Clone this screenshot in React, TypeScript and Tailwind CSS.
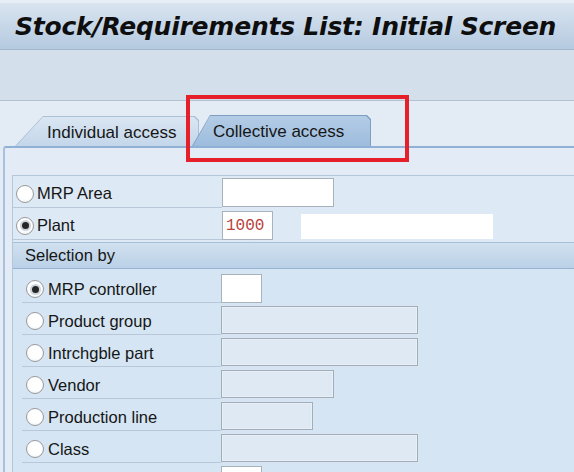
import React from "react";

const Radio = ({ checked }: { checked?: boolean }) => (
  <span className="flex h-[18px] w-[18px] shrink-0 items-center justify-center rounded-full border border-[#9a9a9a] bg-[radial-gradient(circle_at_50%_35%,#ffffff_55%,#e9ecef)]">
    {checked && (
      <span className="h-[7px] w-[7px] rounded-full bg-[#262626] shadow-[0_0_0_2px_#cdd3da]" />
    )}
  </span>
);

type RowProps = {
  label: string;
  checked?: boolean;
  labelClass: string;
  children?: React.ReactNode;
};

const Row = ({ label, checked, labelClass, children }: RowProps) => (
  <div className="flex h-[32px]">
    <div className={labelClass}>
      <Radio checked={checked} />
      <span className="leading-none">{label}</span>
    </div>
    <div className="flex items-start gap-[28px] pt-[3px]">{children}</div>
  </div>
);

const Disabled = ({ w }: { w: string }) => (
  <div className={`${w} h-[28px] border border-[#a3adb7] bg-[#dfe9f3] shadow-[inset_0_0_0_1px_#e8eff6]`} />
);

export default function App() {
  const frameLabel =
    "flex w-[209px] shrink-0 items-center gap-[3px] border-b border-[#b9c8d8] pl-[3px] pt-[4px]";
  const groupLabel =
    "flex w-[199px] shrink-0 items-center gap-[4px] border-b border-[#b9c8d8] pl-[4px] pt-[5px]";
  return (
    <div className="relative h-[472px] w-[574px] overflow-hidden bg-[#e3ecf5] font-['Liberation_Sans',Arial,sans-serif] text-[16.5px] text-[#161616]">
      {/* Title bar */}
      <div className="flex h-[50px] items-center border-t-[3px] border-b border-t-[#e8eef5] border-b-[#a3b7cc] bg-[linear-gradient(to_bottom,#d9e4f0,#b5cae0)] pl-[15px]">
        <h1 className="font-['DejaVu_Sans',Verdana,sans-serif] text-[25px] font-bold italic leading-none tracking-[-0.22px] text-[#0e0e0e]">
          Stock/Requirements List: Initial Screen
        </h1>
      </div>
      {/* Toolbar */}
      <div className="h-[51px] border-b border-[#b3c2d2] bg-[#d3dfeb]" />
      {/* Tab strip */}
      <div className="flex h-[45px] items-end pl-[15px] text-[17px]">
        <div className="relative flex h-[30px] w-[184px] items-center pl-[32px] pt-[3px]">
          <div className="absolute inset-0 bg-[#a9c0d8] [clip-path:polygon(0_100%,28px_0,calc(100%-4px)_0,100%_4px,100%_100%)]" />
          <div className="absolute inset-x-[1px] top-[1px] bottom-0 bg-[linear-gradient(to_bottom,#dae6f2,#c3d6ea)] [clip-path:polygon(0_100%,27px_0,calc(100%-4px)_0,100%_4px,100%_100%)]" />
          <span className="relative">Individual access</span>
        </div>
        <div className="relative ml-[-7px] flex h-[31px] w-[179px] items-center pl-[21px] pt-[3px]">
          <div className="absolute inset-0 bg-[#7f9fc2] [clip-path:polygon(0_100%,18px_0,calc(100%-4px)_0,100%_4px,100%_100%)]" />
          <div className="absolute inset-x-[1px] top-[1px] bottom-0 bg-[linear-gradient(to_bottom,#b3cce6,#9dbcdd)] [clip-path:polygon(0_100%,17px_0,calc(100%-4px)_0,100%_4px,100%_100%)]" />
          <span className="relative">Collective access</span>
        </div>
      </div>
      {/* Panel */}
      <div className="ml-[3px] h-[400px] rounded-tl-[3px] border-t-2 border-l-2 border-t-[#8fb1d6] border-l-[#a9c1da] bg-[#e3ecf6] pt-[27px]">
        <div className="ml-[7px] border-t border-l border-[#b4c6d9] bg-[#dde9f4]">
          <Row label="MRP Area" labelClass={frameLabel}>
            <div className="mt-[-1px] h-[29px] w-[112px] border border-[#a9b1ba] bg-white" />
          </Row>
          <Row label="Plant" checked labelClass={frameLabel}>
            <div className="flex h-[29px] w-[51px] items-center border border-[#a9b1ba] bg-white pl-[3px] font-['Liberation_Mono',monospace] text-[16px] text-[#b9403c]">
              1000
            </div>
            <div className="mt-[3px] h-[25px] w-[192px] bg-white" />
          </Row>
          {/* Selection by group */}
          <div className="mt-[2px]">
            <div className="flex h-[27px] items-center border-t border-b border-t-[#a8bfd8] border-b-[#98b3cf] bg-[linear-gradient(to_bottom,#d0e0ef,#bbd1e7)] pl-[12px]">
              Selection by
            </div>
            <div className="bg-[#d5e5f3] pl-[9px] pt-[2px]">
              <Row label="MRP controller" checked labelClass={groupLabel}>
                <div className="h-[29px] w-[41px] border border-[#a9b1ba] bg-white" />
              </Row>
              <Row label="Product group" labelClass={groupLabel}>
                <Disabled w="w-[197px]" />
              </Row>
              <Row label="Intrchgble part" labelClass={groupLabel}>
                <Disabled w="w-[197px]" />
              </Row>
              <Row label="Vendor" labelClass={groupLabel}>
                <Disabled w="w-[113px]" />
              </Row>
              <Row label="Production line" labelClass={groupLabel}>
                <Disabled w="w-[92px]" />
              </Row>
              <Row label="Class" labelClass={groupLabel}>
                <Disabled w="w-[197px]" />
              </Row>
              <Row label="" labelClass={groupLabel}>
                <div className="h-[29px] w-[41px] border border-[#a9b1ba] bg-white" />
              </Row>
            </div>
          </div>
        </div>
      </div>
      {/* Red highlight */}
      <div className="absolute left-[186px] top-[95px] h-[67px] w-[223px] border-[4px] border-[#e5202b]" />
    </div>
  );
}
